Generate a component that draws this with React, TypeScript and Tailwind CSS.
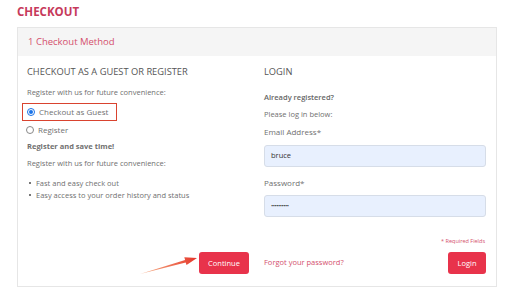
import React from "react";

export default function App() {
  return (
    <div className="relative w-[507px] h-[288px] overflow-hidden bg-white text-[#707070]" style={{ fontFamily: '"Open Sans", "Liberation Sans", sans-serif' }}>
      <div className="pl-[17px] pt-[4px] h-[27px] text-[11.5px] leading-[16px] font-bold text-[#c63a5b]">CHECKOUT</div>
      <div className="ml-[17px] w-[480px] h-[260px] border border-[#e6e6e6]">
        <div className="h-[28px] bg-[#f5f5f5] pl-[10px] flex items-center text-[9.5px] text-[#d4506d]">1 Checkout Method</div>
        <div className="flex">
          <div className="w-[231px] pl-[9px] pt-[9px] flex flex-col">
            <div className="h-[14px] leading-[14px] text-[9.3px] text-[#555]">CHECKOUT AS A GUEST OR REGISTER</div>
            <div className="mt-[7px] h-[12px] leading-[12px] text-[7.5px]">Register with us for future convenience:</div>
            <div className="mt-[5px] -ml-[5px] w-[95px] h-[18px] border-[1.5px] border-[#d9432f] flex items-center pl-[4px] gap-[4px]">
              <span className="w-[8px] h-[8px] rounded-full border border-[#1a73e8] flex items-center justify-center">
                <span className="w-[4px] h-[4px] rounded-full bg-[#1a73e8]" />
              </span>
              <span className="text-[8px] leading-[12px]">Checkout as Guest</span>
            </div>
            <div className="mt-[3px] h-[12px] flex items-center gap-[4px] -ml-[1px]">
              <span className="w-[8px] h-[8px] rounded-full border border-[#888]" />
              <span className="text-[8px] leading-[12px]">Register</span>
            </div>
            <div className="mt-[4px] h-[12px] leading-[12px] text-[7.5px] font-bold text-[#707070]">Register and save time!</div>
            <div className="mt-[5px] h-[12px] leading-[12px] text-[7.5px]">Register with us for future convenience:</div>
            <ul className="mt-[8px] text-[7.5px]">
              <li className="h-[12px] leading-[12px] flex items-center gap-[5px] pl-[2px]"><span className="w-[2px] h-[2px] bg-[#777]" />Fast and easy check out</li>
              <li className="h-[12px] leading-[12px] flex items-center gap-[5px] pl-[2px]"><span className="w-[2px] h-[2px] bg-[#777]" />Easy access to your order history and status</li>
            </ul>
            <div className="mt-[51px] flex justify-end">
              <button className="w-[50px] h-[22px] rounded-[3px] bg-[#e8334b] text-white text-[7.5px] leading-[22px]">Continue</button>
            </div>
          </div>
          <div className="w-[222px] ml-[15px] pt-[9px] flex flex-col">
            <div className="h-[14px] leading-[14px] text-[9.3px] text-[#555]">LOGIN</div>
            <div className="mt-[12px] h-[12px] leading-[12px] text-[7.5px] font-semibold text-[#666]">Already registered?</div>
            <div className="mt-[5px] h-[12px] leading-[12px] text-[7.5px]">Please log in below:</div>
            <div className="mt-[6px] h-[12px] leading-[12px] text-[8px]">Email Address*</div>
            <div className="mt-[7px] h-[22px] rounded-[3px] border border-[#d6dde8] bg-[#e8f0fe] flex items-center pl-[6px] text-[7.5px] text-[#333]">bruce</div>
            <div className="mt-[10px] h-[12px] leading-[12px] text-[8px]">Password*</div>
            <div className="mt-[6px] h-[22px] rounded-[3px] border border-[#d6dde8] bg-[#e8f0fe] flex items-center pl-[6px] text-[6px] text-[#333] tracking-[-0.5px]">••••••••••</div>
            <div className="mt-[19px] h-[10px] leading-[10px] text-[5.5px] text-right text-[#d4506d] pr-[1px]">* Required Fields</div>
            <div className="mt-[6px] flex items-center justify-between">
              <span className="text-[7.5px] text-[#d4506d]">Forgot your password?</span>
              <button className="w-[38px] h-[22px] rounded-[3px] bg-[#e8334b] text-white text-[7.5px] leading-[22px]">Login</button>
            </div>
          </div>
        </div>
      </div>
      <svg className="absolute left-0 top-0 pointer-events-none" width="507" height="288" viewBox="0 0 507 288">
        <defs>
          <linearGradient id="ag" x1="140" y1="274" x2="197" y2="258" gradientUnits="userSpaceOnUse">
            <stop offset="0" stopColor="#f07a3a" stopOpacity="0.6" />
            <stop offset="1" stopColor="#e5342a" />
          </linearGradient>
        </defs>
        <polygon points="140,274 185.1,260.0 184.3,257.3 197,258 186.5,265.1 185.7,262.4" fill="url(#ag)" />
      </svg>
    </div>
  );
}
